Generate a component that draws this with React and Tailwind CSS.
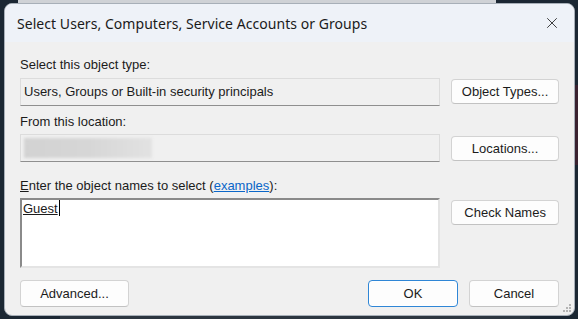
import { X } from 'lucide-react'

const FONT = { fontFamily: '"Liberation Sans", Arial, sans-serif' }

function Btn({ children, primary = false, className = '' }) {
  return (
    <button
      type="button"
      className={
        'flex items-center justify-center rounded-[4px] bg-[#fdfdfd] text-[13px] text-[#1b1b1b] border ' +
        (primary ? 'border-[#2f86d6] shadow-[inset_0_0_0_1px_#ffffff]' : 'border-[#d3d3d3] border-b-[#c2c2c2]') +
        ' ' + className
      }
    >
      {children}
    </button>
  )
}

function Grip() {
  return (
    <svg width="10" height="10" viewBox="0 0 10 10" className="absolute right-[2px] bottom-[2px]">
      {[[8, 2], [5, 5], [8, 5], [2, 8], [5, 8], [8, 8]].map(([x, y], i) => (
        <rect key={i} x={x - 1} y={y - 1} width="2" height="2" fill="#b4b4b4" />
      ))}
    </svg>
  )
}

export default function App() {
  return (
    <div className="relative w-[578px] h-[319px] overflow-hidden bg-[#1b2733]" style={FONT}>
      {/* window behind */}
      <div className="absolute left-[18px] top-0 w-[478px] h-[3px] bg-[#cfd2d6]" />
      <div className="absolute right-0 top-[85px] w-[3px] h-[80px] bg-[#3a2230]" />
      <div className="absolute left-[60px] bottom-0 w-[470px] h-[3px] bg-[#2c3640]" />

      <div className="pt-[3px] pl-[4px]">
        <div className="relative w-[571px] h-[313px] flex flex-col rounded-[8px] overflow-hidden border border-[#a7afb8] bg-[#f0f0f0]">
          {/* title bar */}
          <div className="h-[38px] shrink-0 flex items-center justify-between bg-[#eef2f8] pl-[12px] pr-[13px]">
            <span className="text-[14px] text-[#1a1a1a] tracking-[0.05px]" style={{ fontFamily: '"Noto Sans", "Open Sans", sans-serif' }}>
              Select Users, Computers, Service Accounts or Groups
            </span>
            <X size={18} strokeWidth={1.1} className="text-[#1a1a1a]" />
          </div>

          {/* body */}
          <div className="flex-1 flex flex-col pt-[15px] pl-[15px] pr-[15px] text-[13px] text-[#1b1b1b]">
            <div className="h-[16px] leading-[16px]">Select this object type:</div>
            <div className="mt-[5px] flex gap-[11px]">
              <div className="w-[421px] h-[28px] flex items-center pl-[3px] border border-[#dcdcdc] border-b-[#8f8f8f] bg-[#f0f0f0]">
                Users, Groups or Built-in security principals
              </div>
              <Btn className="mt-[1px] w-[108px] h-[25px]">Object Types...</Btn>
            </div>

            <div className="mt-[8px] h-[16px] leading-[16px]">From this location:</div>
            <div className="mt-[4px] flex gap-[11px]">
              <div className="w-[421px] h-[28px] flex items-center pl-[3px] border border-[#dcdcdc] border-b-[#8f8f8f] bg-[#f0f0f0]">
                <div className="w-[128px] h-[20px] bg-gradient-to-r from-[#d2d2d2] via-[#d6d6d6] to-[#e2e2e2] blur-[1.5px]" />
              </div>
              <Btn className="mt-[2px] w-[108px] h-[25px]">Locations...</Btn>
            </div>

            <div className="mt-[16px] h-[16px] leading-[16px]">
              <span className="underline">E</span>nter the object names to select (
              <span className="text-[#0a66c8] underline">examples</span>):
            </div>
            <div className="mt-[4px] flex gap-[11px]">
              <div className="w-[421px] h-[70px] pl-[1px] pt-0 leading-[16px] bg-white border-2 border-t-[#8a8a8a] border-l-[#8a8a8a] border-r-[#e4e4e4] border-b-[#e4e4e4]">
                <span className="underline">Guest</span>
                <span className="inline-block align-[-3px] w-[1px] h-[16px] bg-black ml-[1px]" />
              </div>
              <Btn className="mt-[2px] w-[108px] h-[25px]">Check Names</Btn>
            </div>

            <div className="mt-[12px] flex">
              <Btn className="w-[109px] h-[27px]">Advanced...</Btn>
              <div className="flex-1" />
              <Btn primary className="w-[90px] h-[27px]">OK</Btn>
              <Btn className="ml-[11px] w-[90px] h-[27px]">Cancel</Btn>
            </div>
          </div>
          <Grip />
        </div>
      </div>
    </div>
  )
}
